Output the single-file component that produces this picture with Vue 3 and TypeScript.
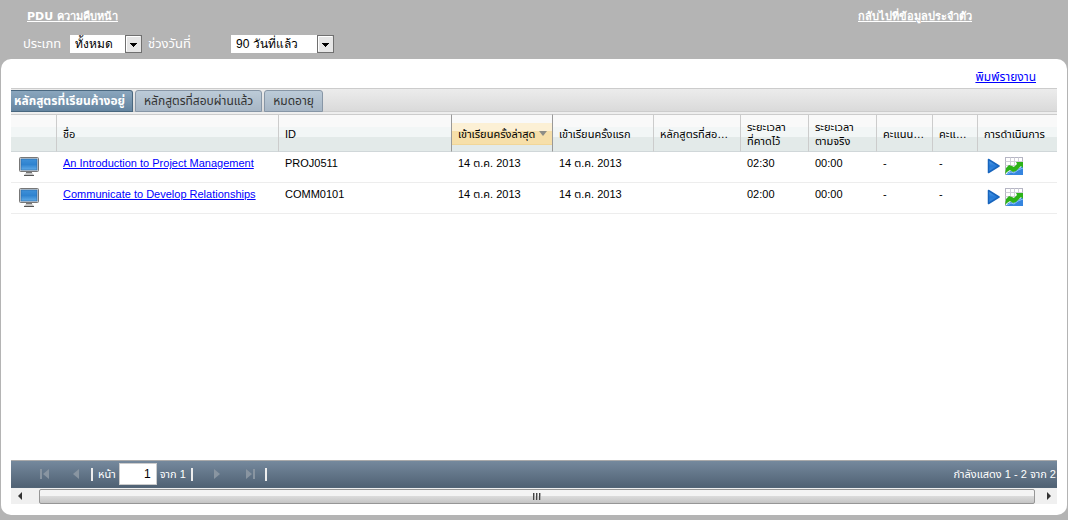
<script setup lang="ts">
import { ref } from 'vue'

interface Column {
  key: string
  label: string
  width: string
  sorted?: boolean
}

interface Course {
  id: string
  name: string
  last: string
  first: string
  passed: string
  expected: string
  actual: string
  score: string
  best: string
}

const kind = ref('all')
const range = ref('90')
const page = ref('1')
const activeTab = ref(0)
const tabs = ['หลักสูตรที่เรียนค้างอยู่', 'หลักสูตรที่สอบผ่านแล้ว', 'หมดอายุ']

const columns: Column[] = [
  { key: 'icon', label: '', width: 'w-icon' },
  { key: 'name', label: 'ชื่อ', width: 'w-name' },
  { key: 'id', label: 'ID', width: 'w-id' },
  { key: 'last', label: 'เข้าเรียนครั้งล่าสุด', width: 'w-date', sorted: true },
  { key: 'first', label: 'เข้าเรียนครั้งแรก', width: 'w-date' },
  { key: 'passed', label: 'หลักสูตรที่สอ…', width: 'w-passed' },
  { key: 'expected', label: 'ระยะเวลา\nที่คาดไว้', width: 'w-time' },
  { key: 'actual', label: 'ระยะเวลา\nตามจริง', width: 'w-time' },
  { key: 'score', label: 'คะแนน…', width: 'w-score' },
  { key: 'best', label: 'คะแ…', width: 'w-best' },
  { key: 'actions', label: 'การดำเนินการ', width: 'w-actions' },
]

const courses: Course[] = [
  { id: 'PROJ0511', name: 'An Introduction to Project Management', last: '14 ต.ค. 2013', first: '14 ต.ค. 2013', passed: '', expected: '02:30', actual: '00:00', score: '-', best: '-' },
  { id: 'COMM0101', name: 'Communicate to Develop Relationships', last: '14 ต.ค. 2013', first: '14 ต.ค. 2013', passed: '', expected: '02:00', actual: '00:00', score: '-', best: '-' },
]
</script>

<template>
  <div class="page">
    <header class="top">
      <div class="links">
        <a href="#pdu">PDU ความคืบหน้า</a>
        <a href="#profile">กลับไปที่ข้อมูลประจำตัว</a>
      </div>
      <form class="filters" @submit.prevent>
        <label class="kind-label" for="kind">ประเภท</label>
        <span class="select kind">
          <select id="kind" v-model="kind"><option value="all">ทั้งหมด</option></select>
          <svg class="arrow" viewBox="0 0 17 18" aria-hidden="true"><rect x=".5" y=".5" width="16" height="17" fill="#e6e6e6" stroke="#707070" /><path d="M1.500 16V1.500H15" fill="none" stroke="#fff" /><path d="M5 8h7v1h-1v1h-1v1H9v1H8v-1H7v-1H6V9H5z" fill="#000" /></svg>
        </span>
        <label class="range-label" for="range">ช่วงวันที่</label>
        <span class="select range">
          <select id="range" v-model="range"><option value="90">90 วันที่แล้ว</option></select>
          <svg class="arrow" viewBox="0 0 17 18" aria-hidden="true"><rect x=".5" y=".5" width="16" height="17" fill="#e6e6e6" stroke="#707070" /><path d="M1.500 16V1.500H15" fill="none" stroke="#fff" /><path d="M5 8h7v1h-1v1h-1v1H9v1H8v-1H7v-1H6V9H5z" fill="#000" /></svg>
        </span>
      </form>
    </header>

    <main class="panel">
      <div class="print"><a href="#print">พิมพ์รายงาน</a></div>
      <nav class="tabs" role="tablist">
        <button v-for="(tab, i) in tabs" :key="tab" type="button" role="tab" class="tab" :class="{ active: i === activeTab }" :aria-selected="i === activeTab" @click="activeTab = i">{{ tab }}</button>
      </nav>

      <div class="grid">
        <table>
          <colgroup><col v-for="c in columns" :key="c.key" :class="c.width"></colgroup>
          <thead>
            <tr>
              <th v-for="c in columns" :key="c.key" scope="col" :class="{ sorted: c.sorted }">
                <div class="head"><span>{{ c.label }}</span><svg v-if="c.sorted" class="sort" viewBox="0 0 8 5" aria-hidden="true"><path d="M0 0h8L4 5z" fill="#8d8d86" /></svg></div>
              </th>
            </tr>
          </thead>
          <tbody>
            <tr v-for="c in courses" :key="c.id">
              <td class="icon-cell">
                <svg class="monitor" viewBox="0 0 20 20" role="img" aria-label="คอร์ส">
                  <defs><linearGradient id="screen" x2="0" y2="1"><stop offset="0" stop-color="#3f91d9" /><stop offset=".5" stop-color="#2f83cf" /><stop offset="1" stop-color="#62ace8" /></linearGradient></defs>
                  <rect x=".5" y=".5" width="19" height="14" rx="1" fill="#d4d4d4" stroke="#777" />
                  <rect x="2" y="2" width="16" height="11" fill="url(#screen)" stroke="#2567a5" stroke-width=".6" />
                  <path d="M7 15h6v1l2 2v1H5v-1l2-2z" fill="#c4c4c4" /><path d="M7 15h6v1H7z" fill="#777" /><path d="M5 18.500h10" stroke="#555" />
                </svg>
              </td>
              <td><a :href="'#' + c.id">{{ c.name }}</a></td>
              <td>{{ c.id }}</td>
              <td>{{ c.last }}</td>
              <td>{{ c.first }}</td>
              <td>{{ c.passed }}</td>
              <td>{{ c.expected }}</td>
              <td>{{ c.actual }}</td>
              <td>{{ c.score }}</td>
              <td>{{ c.best }}</td>
              <td class="action-cell">
                <div class="actions">
                  <button type="button" aria-label="เล่น">
                    <svg class="play" viewBox="0 0 13 16" aria-hidden="true"><defs><linearGradient id="play" x2="0" y2="1"><stop offset="0" stop-color="#5aa5ed" /><stop offset=".5" stop-color="#2479d6" /><stop offset="1" stop-color="#3f8fe2" /></linearGradient></defs><path d="M1.500 1.500L12 8 1.500 14.500z" fill="url(#play)" stroke="#1764bd" stroke-width="1.500" stroke-linejoin="round" /></svg>
                  </button>
                  <button type="button" aria-label="ความคืบหน้า">
                    <svg class="chart" viewBox="0 0 18 18" aria-hidden="true">
                      <rect x=".5" y=".5" width="17" height="17" fill="#fff" stroke="#b5b5c3" />
                      <path d="M.5 4.500h17M.5 8.500h17M.5 12.500h17M5.500 .5v17M9.500 .5v17M13.500 .5v17" stroke="#d0d0d8" fill="none" />
                      <path d="M1 18l2-3 3-1 3 1 4-3 2-1 3-3v10z" fill="#3585df" />
                      <path d="M2 17l4-2 3 1 4-3 5-2" stroke="#8bc2f7" fill="none" />
                      <path d="M1 11l3-3 3 1 2 1 3-3-1-2h7v6l-2-2-5 5-3 1-3-2-3 2-2 2z" fill="#2db218" />
                    </svg>
                  </button>
                </div>
              </td>
            </tr>
          </tbody>
        </table>
      </div>

      <footer class="pager">
        <button type="button" class="first" aria-label="หน้าแรก"><svg viewBox="0 0 12 12"><path d="M1 1h2v10H1zM10 1v10L4 6z" /></svg></button>
        <button type="button" class="prev" aria-label="ก่อนหน้า"><svg viewBox="0 0 12 12"><path d="M9 1v10L3 6z" /></svg></button>
        <i class="bar"></i>
        <label for="page">หน้า</label>
        <input id="page" v-model="page" type="text">
        <span>จาก 1</span>
        <i class="bar second"></i>
        <button type="button" class="next" aria-label="ถัดไป"><svg viewBox="0 0 12 12"><path d="M3 1v10l6-5z" /></svg></button>
        <button type="button" class="final" aria-label="หน้าสุดท้าย"><svg viewBox="0 0 12 12"><path d="M9 1h2v10H9zM2 1v10l6-5z" /></svg></button>
        <i class="bar"></i>
        <span class="status">กำลังแสดง 1 - 2 จาก 2</span>
      </footer>

      <div class="scroll">
        <button type="button" aria-label="เลื่อนซ้าย"><svg viewBox="0 0 6 8"><path d="M5 0v8L1 4z" /></svg></button>
        <div class="track"><div class="thumb"><i></i><i></i><i></i></div></div>
        <button type="button" aria-label="เลื่อนขวา"><svg viewBox="0 0 6 8"><path d="M1 0v8l4-4z" /></svg></button>
      </div>
    </main>
  </div>
</template>

<style>
body {
  margin: 0;
}
</style>

<style scoped>
* {
  box-sizing: border-box;
}
.page {
  min-height: 100vh;
  display: flex;
  flex-direction: column;
  padding: 0 1px 5px;
  background: #b4b4b4;
  color: #000;
  font: 11px/14px "Liberation Sans", "Noto Sans Thai", sans-serif;
}
button {
  border: 0;
  padding: 0;
  background: none;
  font: inherit;
}
svg {
  display: block;
}
.top {
  height: 59px;
  color: #fff;
}
.links {
  display: flex;
  justify-content: space-between;
  padding: 9px 95px 0 26px;
  font: bold 11px/16px "DejaVu Sans", sans-serif;
}
.links a {
  color: #fff;
}
.filters {
  display: flex;
  align-items: center;
  height: 18px;
  margin-top: 10px;
  padding-left: 22px;
  font-size: 13px;
}
.kind-label {
  width: 47px;
}
.range-label {
  width: 83px;
  margin-left: 6px;
}
.select {
  display: flex;
  position: relative;
  height: 18px;
}
.kind {
  width: 72px;
}
.range {
  width: 103px;
}
.select select {
  appearance: none;
  width: 100%;
  height: 18px;
  padding: 0 18px 0 5px;
  border: 0;
  border-radius: 0;
  background: #fff;
  color: #000;
  font: 12px/18px "Liberation Sans", sans-serif;
}
.arrow {
  position: absolute;
  right: 0;
  top: 0;
  width: 17px;
  height: 18px;
  pointer-events: none;
}
.panel {
  flex: 1;
  display: flex;
  flex-direction: column;
  padding: 0 10px 11px;
  background: #fff;
  border-radius: 10px;
}
.print {
  height: 29px;
  padding: 9px 21px 0 0;
  text-align: right;
  font-size: 12px;
  line-height: 18px;
}
a {
  color: #00f;
}
.tabs {
  display: flex;
  gap: 2px;
  height: 24px;
  padding-top: 1px;
  border-top: 1px solid #ccc;
  border-bottom: 1px solid #ccc;
  background: linear-gradient(#ececec, #dadada);
}
.tab {
  height: 22px;
  padding: 0 8px;
  border: 1px solid #8796a6;
  border-radius: 3px 3px 0 0;
  background: linear-gradient(#bccbd8, #a7b6c5);
  color: #333;
  font-size: 12px;
  line-height: 20px;
  white-space: nowrap;
}
.tab.active {
  padding: 0 7px 0 3px;
  border-color: #49677f;
  border-left: 0;
  border-radius: 0 3px 0 0;
  background: linear-gradient(#8aa6bd, #64849f);
  color: #fff;
  font-weight: bold;
}
.grid {
  flex: 1;
  padding-top: 2px;
  background: linear-gradient(#eee 0 2px, #fff 2px);
  overflow: hidden;
}
table {
  width: 100%;
  table-layout: fixed;
  border-collapse: separate;
  border-spacing: 0;
}
.w-icon { width: 46px; }
.w-id { width: 173px; }
.w-date { width: 101px; }
.w-passed { width: 87px; }
.w-time { width: 68px; }
.w-score { width: 56px; }
.w-best { width: 45px; }
.w-actions { width: 79px; }
th {
  height: 38px;
  padding: 2px 0 0;
  border-right: 1px solid #ccc;
  border-top: 1px solid #ccc;
  border-bottom: 1px solid #d0d7d9;
  background: linear-gradient(#f9f9f9 0 12px, #f2f6f6 12px 22px, #e3eae9 22px);
  font-weight: normal;
  text-align: left;
}
th:last-child {
  border-right: 0;
}
th:nth-child(3), th.sorted {
  border-right-color: #999;
}
.head {
  display: flex;
  align-items: center;
  gap: 4px;
  min-height: 22px;
  padding-left: 6px;
  white-space: pre;
}
.sorted .head {
  background: linear-gradient(#fcf0d5 0 8px, #f6dfa9 8px);
  border-bottom: 1px solid #f1d698;
}
.sort {
  flex: none;
  width: 8px;
  height: 5px;
}
td {
  height: 31px;
  padding: 4px 0 0 6px;
  border-bottom: 1px solid #ededed;
  vertical-align: top;
  white-space: nowrap;
}
.icon-cell {
  padding: 5px 0 0 8px;
}
.monitor {
  width: 20px;
  height: 20px;
}
.action-cell {
  padding: 5px 0 0 9px;
}
.actions {
  display: flex;
  align-items: center;
  gap: 5px;
}
.play {
  width: 13px;
  height: 16px;
}
.chart {
  width: 18px;
  height: 18px;
}
.pager {
  display: flex;
  align-items: center;
  height: 28px;
  border-top: 1px solid #aaa;
  border-bottom: 1px solid #536577;
  background: linear-gradient(#75899d, #506274);
  color: #fff;
}
.pager svg {
  width: 12px;
  height: 12px;
  fill: #8995a1;
}
.first {
  margin-left: 28px;
}
.prev {
  margin-left: 19px;
}
.bar {
  width: 2px;
  height: 13px;
  margin: 0 5px 0 9px;
  background: #eee;
}
.pager input {
  width: 38px;
  height: 22px;
  margin: 0 3px;
  padding: 0 5px;
  border: 1px solid #ccc;
  background: #fff;
  font: 12px "Liberation Sans", sans-serif;
  text-align: right;
}
.bar.second {
  margin: 0 18px 0 5px;
}
.final {
  margin-left: 21px;
}
.status {
  margin-left: auto;
  padding-right: 1px;
}
.scroll {
  display: flex;
  height: 16px;
  background: #f0f0f0;
}
.scroll button {
  display: flex;
  align-items: center;
  justify-content: center;
  width: 17px;
}
.scroll svg {
  width: 6px;
  height: 8px;
  fill: #333;
}
.track {
  flex: 1;
  display: flex;
  padding: 1px 5px 0 11px;
}
.thumb {
  flex: 1;
  display: flex;
  align-items: center;
  justify-content: center;
  gap: 1px;
  height: 15px;
  border: 1px solid #969696;
  border-radius: 2px;
  background: linear-gradient(#f4f4f4 0 6px, #dcdcdc 6px, #c5c5c5);
}
.thumb i {
  width: 2px;
  height: 7px;
  border-left: 1px solid #444;
  background: #aaa;
}
</style>
